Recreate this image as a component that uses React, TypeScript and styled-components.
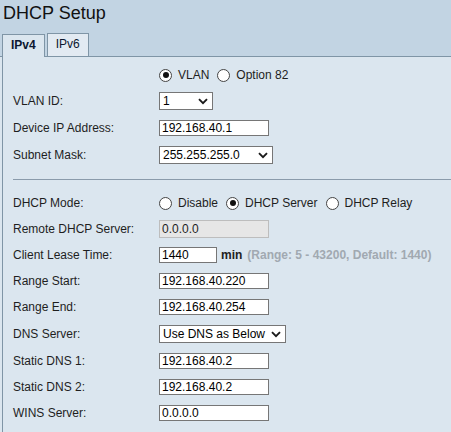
import React from "react";
import styled, { createGlobalStyle } from "styled-components";

const Global = createGlobalStyle`
  html, body { margin: 0; padding: 0; }
  body {
    background: #dbe6ef;
    font-family: Arial, "Liberation Sans", sans-serif;
    font-size: 12px;
    color: #1e1e1e;
    overflow: hidden;
  }
`;

const LINE = "#7f95a6";

const Header = styled.div`
  background: #c2d4e3;
  height: 56px;
  border-bottom: 1px solid ${LINE};
  display: flex;
  flex-direction: column;
`;

const Title = styled.h1`
  margin: 0;
  padding: 3px 0 0 3px;
  font-size: 18px;
  line-height: 20px;
  font-weight: normal;
  color: #111;
`;

const TabBar = styled.div`
  margin-top: auto;
  margin-bottom: -1px;
  padding-left: 2px;
  display: flex;
  align-items: flex-end;
  gap: 2px;
  position: relative;
`;

const Tab = styled.div<{ $active?: boolean }>`
  box-sizing: border-box;
  height: ${(p) => (p.$active ? 23 : 24)}px;
  padding: 0 8px;
  line-height: 20px;
  font-size: 12px;
  border: 1px solid ${LINE};
  border-bottom: ${(p) => (p.$active ? "none" : `1px solid ${LINE}`)};
  background: ${(p) => (p.$active ? "#dbe6ef" : "#e2eaf2")};
  font-weight: ${(p) => (p.$active ? "bold" : "normal")};
  color: #0c1730;
`;

const Panel = styled.div`
  margin-left: 2px;
  border-left: 1px solid ${LINE};
  padding: 6px 0 6px 10px;
`;

const Row = styled.div<{ $h: number }>`
  display: grid;
  grid-template-columns: 146px 1fr;
  align-items: center;
  height: ${(p) => p.$h}px;
`;

const Label = styled.span`
  color: #1e1e1e;
  white-space: nowrap;
`;

const Divider = styled.div`
  height: 1px;
  background: #8a9bab;
  margin: 10px 0;
`;

const Input = styled.input<{ $w: number }>`
  box-sizing: border-box;
  width: ${(p) => p.$w}px;
  height: 16px;
  border: 1px solid #767676;
  border-radius: 0;
  padding: 0 2px;
  margin: 0;
  font: 12px Arial, "Liberation Sans", sans-serif;
  color: #000;
  background: #fff;
  outline: none;
  &:disabled {
    height: 18px;
    background: #e6e6e6;
    border-color: #bdbdbd;
    color: #1e1e1e;
    -webkit-text-fill-color: #1e1e1e;
    opacity: 1;
  }
`;

const Select = styled.div<{ $w: number }>`
  box-sizing: border-box;
  width: ${(p) => p.$w}px;
  height: 18px;
  border: 1px solid #767676;
  background: #fff;
  display: flex;
  align-items: center;
  justify-content: space-between;
  padding: 0 4px 0 3px;
  color: #000;
  white-space: nowrap;
`;

const Chevron = () => (
  <svg width="10" height="7" viewBox="0 0 10 7" aria-hidden>
    <path d="M1 1.2 L5 5.2 L9 1.2" fill="none" stroke="#1a1a1a" strokeWidth="1.9" />
  </svg>
);

const RadioGroup = styled.div`
  display: flex;
  align-items: center;
  gap: 8px;
`;

const RadioLabel = styled.label`
  display: flex;
  align-items: center;
  gap: 6px;
  color: #1e1e1e;
  white-space: nowrap;
`;

const Radio = styled.input.attrs({ type: "radio" })`
  appearance: none;
  -webkit-appearance: none;
  box-sizing: border-box;
  margin: 0;
  width: 13px;
  height: 13px;
  border: 1px solid #444;
  border-radius: 50%;
  background: #fff;
  display: grid;
  place-content: center;
  &:checked::before {
    content: "";
    width: 6px;
    height: 6px;
    border-radius: 50%;
    background: #111;
  }
`;

const Inline = styled.div`
  display: flex;
  align-items: center;
  gap: 4px;
`;

const Unit = styled.span`
  font-weight: bold;
  color: #222;
`;

const Hint = styled.span`
  font-weight: bold;
  color: #a1a9b1;
  margin-left: 1px;
  white-space: nowrap;
`;

export default function App() {
  return (
    <>
      <Global />
      <Header>
        <Title>DHCP Setup</Title>
        <TabBar>
          <Tab $active>IPv4</Tab>
          <Tab>IPv6</Tab>
        </TabBar>
      </Header>
      <Panel>
        <Row $h={24}>
          <span />
          <RadioGroup>
            <RadioLabel>
              <Radio name="iftype" defaultChecked />
              VLAN
            </RadioLabel>
            <RadioLabel>
              <Radio name="iftype" />
              Option 82
            </RadioLabel>
          </RadioGroup>
        </Row>
        <Row $h={28}>
          <Label>VLAN ID:</Label>
          <Select $w={54}>
            1<Chevron />
          </Select>
        </Row>
        <Row $h={26}>
          <Label>Device IP Address:</Label>
          <Input $w={110} defaultValue="192.168.40.1" />
        </Row>
        <Row $h={28}>
          <Label>Subnet Mask:</Label>
          <Select $w={114}>
            255.255.255.0<Chevron />
          </Select>
        </Row>
        <Divider />
        <Row $h={26}>
          <Label>DHCP Mode:</Label>
          <RadioGroup>
            <RadioLabel>
              <Radio name="mode" />
              Disable
            </RadioLabel>
            <RadioLabel>
              <Radio name="mode" defaultChecked />
              DHCP Server
            </RadioLabel>
            <RadioLabel>
              <Radio name="mode" />
              DHCP Relay
            </RadioLabel>
          </RadioGroup>
        </Row>
        <Row $h={26}>
          <Label>Remote DHCP Server:</Label>
          <Input $w={110} defaultValue="0.0.0.0" disabled />
        </Row>
        <Row $h={26}>
          <Label>Client Lease Time:</Label>
          <Inline>
            <Input $w={58} defaultValue="1440" />
            <Unit>min</Unit>
            <Hint>(Range: 5 - 43200, Default: 1440)</Hint>
          </Inline>
        </Row>
        <Row $h={26}>
          <Label>Range Start:</Label>
          <Input $w={110} defaultValue="192.168.40.220" />
        </Row>
        <Row $h={26}>
          <Label>Range End:</Label>
          <Input $w={110} defaultValue="192.168.40.254" />
        </Row>
        <Row $h={28}>
          <Label>DNS Server:</Label>
          <Select $w={127}>
            Use DNS as Below<Chevron />
          </Select>
        </Row>
        <Row $h={26}>
          <Label>Static DNS 1:</Label>
          <Input $w={110} defaultValue="192.168.40.2" />
        </Row>
        <Row $h={26}>
          <Label>Static DNS 2:</Label>
          <Input $w={110} defaultValue="192.168.40.2" />
        </Row>
        <Row $h={26}>
          <Label>WINS Server:</Label>
          <Input $w={110} defaultValue="0.0.0.0" />
        </Row>
      </Panel>
    </>
  );
}
